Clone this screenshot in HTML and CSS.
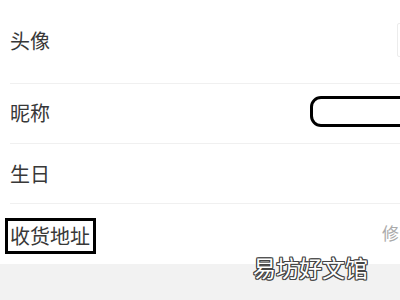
FILE: index.html
```html
<!DOCTYPE html>
<html lang="zh-CN">
<head>
<meta charset="utf-8">
<link rel="stylesheet" href="styles.css">
</head>
<body>
<div class="page">
  <ul class="list">
    <li class="row row-avatar">
      <span class="label">头像</span>
      <span class="avatar"></span>
    </li>
    <li class="row row-nick">
      <span class="label">昵称</span>
      <span class="nick-box"></span>
    </li>
    <li class="row row-birth">
      <span class="label">生日</span>
    </li>
    <li class="row row-addr">
      <span class="label label-boxed">收货地址</span>
      <span class="edit">修改</span>
    </li>
  </ul>
  <div class="footer">
    <span class="watermark">易坊好文馆</span>
  </div>
</div>
</body>
</html>
```

FILE: styles.css
```css
html, body {
  margin: 0;
  padding: 0;
  background: #fff;
  overflow: hidden;
}
.page {
  width: 400px;
  height: 300px;
  position: relative;
  overflow: hidden;
  font-family: "Noto Sans CJK SC", "Noto Sans", sans-serif;
}
.list {
  list-style: none;
  margin: 0;
  padding: 0;
}
.row {
  display: flex;
  align-items: center;
  justify-content: space-between;
  margin-left: 10px;
  border-bottom: 1px solid #f0f0f0;
  box-sizing: border-box;
}
.row-avatar { height: 84px; }
.row-nick { height: 60px; }
.row-birth { height: 60px; }
.row-addr { height: 60px; border-bottom: none; }
.label {
  font-size: 20px;
  line-height: 22px;
  color: #383838;
}
.row-avatar .label { margin-top: -1px; }
.row-nick .label { margin-top: -1px; }
.label-boxed {
  border: 3px solid #000;
  padding: 4px 3px 4px 2px;
  margin-left: -5px;
  margin-top: 3px;
}
.avatar {
  width: 32px;
  height: 32px;
  border: 1px solid #ececec;
  border-radius: 2px;
  margin-right: -31px;
  margin-top: -4px;
}
.nick-box {
  width: 120px;
  height: 25px;
  border: 3px solid #000;
  border-radius: 11px 0 0 11px;
  margin-right: -36px;
  margin-top: -4px;
}
.edit {
  font-size: 17px;
  line-height: 20px;
  color: #aaa;
  margin-right: -16px;
  margin-top: -2px;
}
.footer {
  height: 36px;
  background: #f2f2f2;
}
.watermark {
  position: absolute;
  left: 253px;
  top: 254px;
  font-size: 23px;
  line-height: 26px;
  color: #fff;
  font-weight: 400;
  text-shadow:
    1px 0 0 #444, -1px 0 0 #444, 0 1px 0 #444, 0 -1px 0 #444,
    1px 1px 0 #444, -1px -1px 0 #444, 1px -1px 0 #444, -1px 1px 0 #444;
}
```
